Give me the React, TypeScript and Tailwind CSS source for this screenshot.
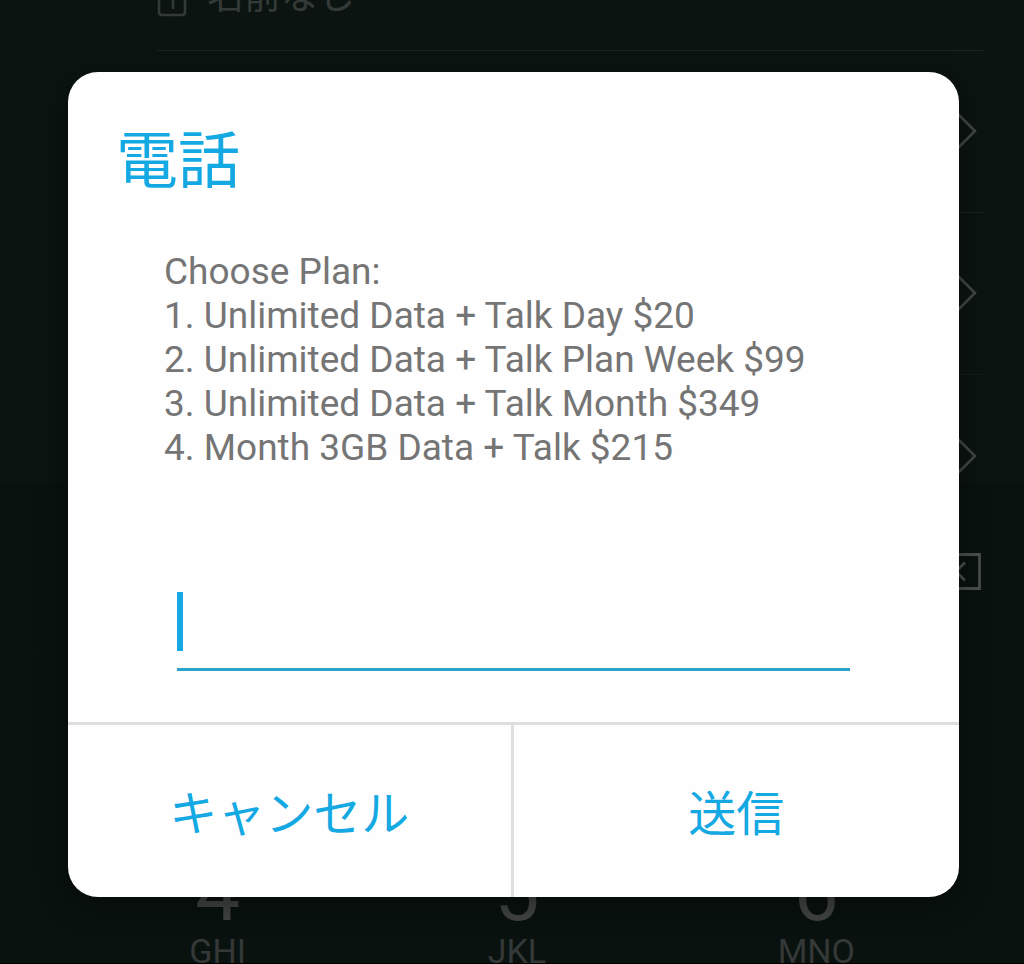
import React from "react";

const plans: string[] = [
  "1. Unlimited Data + Talk Day $20",
  "2. Unlimited Data + Talk Plan Week $99",
  "3. Unlimited Data + Talk Month $349",
  "4. Month 3GB Data + Talk $215",
];

const keys = [
  { digit: "4", letters: "GHI" },
  { digit: "5", letters: "JKL" },
  { digit: "6", letters: "MNO" },
];

function Chevron() {
  return (
    <svg aria-hidden="true" className="h-10 w-6 shrink-0" viewBox="0 0 24 40" fill="none">
      <path d="M2 0 L22 20 L2 40" stroke="#414644" strokeWidth="2.6" />
    </svg>
  );
}

function SimIcon() {
  return (
    <svg aria-hidden="true" className="h-9 w-[30px] shrink-0" viewBox="0 0 30 36" fill="none">
      <path d="M9 2 H25 Q28 2 28 5 V31 Q28 34 25 34 H5 Q2 34 2 31 V9 Z" stroke="#343a37" strokeWidth="2.6" />
      <path d="M11 13 L16 10 V28" stroke="#343a37" strokeWidth="2.6" />
    </svg>
  );
}

function BackspaceIcon() {
  return (
    <svg aria-hidden="true" className="h-[37px] w-14" viewBox="0 0 56 37" fill="none">
      <path d="M16 1.5 H54.5 V35.5 H16 L2 18.5 Z" stroke="#4a4e4c" strokeWidth="2.8" />
      <path d="M22 9.500 L40 27.500 M40 9.500 L22 27.500" stroke="#4a4e4c" strokeWidth="2.6" />
    </svg>
  );
}

function Dialer() {
  return (
    <div className="flex h-full flex-col overflow-hidden">
      <ul className="-mt-[111px] shrink-0 pl-[157px] pr-[41px]">
        <li className="flex h-[162px] items-end border-b border-[#1c2522] pb-[33px]">
          <SimIcon />
          <span className="pl-5 text-[37px] leading-[40px] text-[#343a37]">名前なし</span>
        </li>
        <li className="flex h-[162px] items-center justify-end border-b border-[#19221f] pb-px pr-1.5">
          <Chevron />
        </li>
        <li className="flex h-[162px] items-center justify-end border-b border-[#141d1a] pb-px pr-1.5">
          <Chevron />
        </li>
        <li className="flex h-[162px] items-center justify-end pb-px pr-1.5">
          <Chevron />
        </li>
      </ul>
      <section className="relative -mt-[55px] grow bg-[#09120f]">
        <div className="flex h-[171px] items-center justify-end border-b border-[#0c1512] pr-[43px] pt-2">
          <button type="button" aria-label="削除">
            <BackspaceIcon />
          </button>
        </div>
        <div className="grid grid-cols-3 pl-[68px] pr-[58px] pt-[200px] text-[#343837]">
          {keys.map((key) => (
            <button key={key.digit} type="button" className="flex flex-col items-center">
              <span className="text-[80px] leading-[80px] text-[#404443]">{key.digit}</span>
              <span className="text-[34px] leading-[36px]">{key.letters}</span>
            </button>
          ))}
        </div>
      </section>
    </div>
  );
}

export default function App() {
  return (
    <main
      lang="ja"
      className="relative h-screen overflow-hidden border-b border-black bg-[#0b1411] font-['Roboto','Noto_Sans_CJK_JP',sans-serif]"
    >
      <Dialer />
      <div className="absolute inset-0 flex items-start pl-[68px] pr-[65px] pt-[72px]">
        <form
          role="dialog"
          aria-labelledby="dialog-title"
          className="w-full overflow-hidden rounded-[30px] bg-[#fefefe] shadow-[0_8px_30px_rgba(0,0,0,0.4)]"
          onSubmit={(event) => event.preventDefault()}
        >
          <h1 id="dialog-title" className="px-12 pt-[46px] text-[62px] leading-[88px] text-[#14a9e3]">
            電話
          </h1>
          <label htmlFor="reply" className="block px-24 pt-11 text-[37px] leading-[44px] text-[#757575]">
            <span className="block">Choose Plan:</span>
            {plans.map((plan) => (
              <span key={plan} className="block">
                {plan}
              </span>
            ))}
          </label>
          <div className="mx-[109px] mt-[122px] flex border-b-[3px] border-[#2ba3cf] pb-[17px]">
            <span className="h-[59px] w-[6px] bg-[#14a9e3]" />
            <input
              id="reply"
              type="text"
              className="min-w-0 grow bg-transparent text-[37px] text-[#757575] caret-transparent outline-none"
            />
          </div>
          <div className="mt-[51px] grid grid-cols-2 border-t-[3px] border-[#dedede] text-[48px] leading-[72px] text-[#14a9e3]">
            <button type="button" className="border-r-[3px] border-[#dedede] pb-[46px] pt-[54px]">
              キャンセル
            </button>
            <button type="submit" className="pb-[46px] pt-[54px]">
              送信
            </button>
          </div>
        </form>
      </div>
    </main>
  );
}
